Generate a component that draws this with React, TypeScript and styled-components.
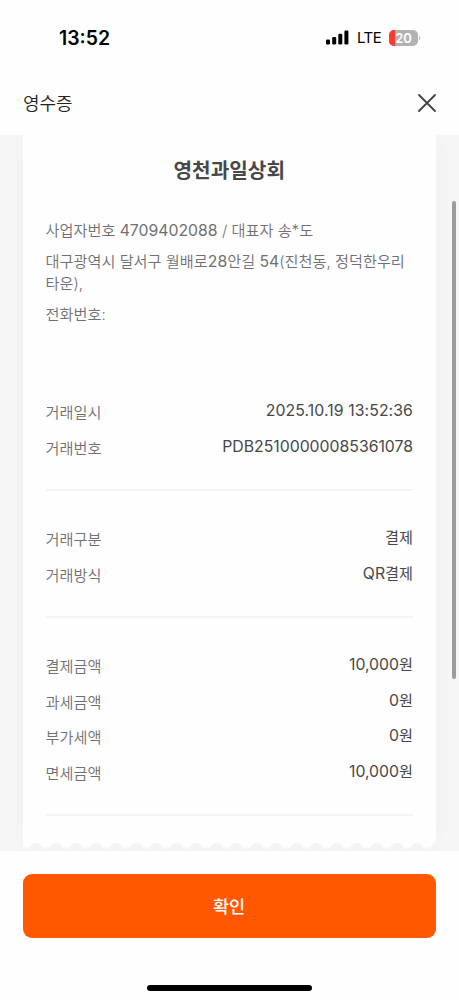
import React from 'react';
import styled, { createGlobalStyle } from 'styled-components';

const Global = createGlobalStyle`
  * { box-sizing: border-box; }
  body { margin: 0; background: #fefefe; }
`;

const Screen = styled.div`
  width: 459px;
  height: 1000px;
  display: flex;
  flex-direction: column;
  overflow: hidden;
  background: #fefefe;
  font-family: Inter, 'Noto Sans CJK KR', sans-serif;
  color: #474749;
`;

const StatusBar = styled.div`
  height: 72px;
  flex: none;
  display: flex;
  align-items: center;
  justify-content: space-between;
  padding: 3px 38px 0 59px;
  color: #000;
`;

const Clock = styled.span`
  font-size: 19.4px;
  font-weight: 600;
  line-height: 24px;
`;

const StatusIcons = styled.div`
  display: flex;
  align-items: center;
`;

const Carrier = styled.span`
  margin: 0 7.5px 0 7.5px;
  font-size: 15px;
  line-height: 20px;
  letter-spacing: -0.4px;
`;

const Header = styled.header`
  height: 63px;
  flex: none;
  display: flex;
  align-items: center;
  justify-content: space-between;
  padding: 0 23px 1px;
`;

const HeaderTitle = styled.h1`
  margin: 0;
  padding-top: 2px;
  font-size: 18px;
  font-weight: 350;
  line-height: 24px;
  letter-spacing: -0.1px;
  color: #222;
`;

const CloseButton = styled.button`
  width: 18px;
  height: 18px;
  padding: 0;
  border: 0;
  background: none;
  display: flex;
`;

const Body = styled.main`
  height: 716px;
  flex: none;
  display: flex;
  justify-content: space-between;
  padding-left: 23px;
  overflow: hidden;
  background: #f6f6f6;
`;

const Receipt = styled.section`
  width: 413px;
  height: 713px;
  display: flex;
  flex-direction: column;
  background: #fefefe;
  box-shadow: 0 0 20px rgba(0, 0, 0, 0.03);
`;

const Content = styled.div`
  height: 706px;
  flex: none;
  padding: 21px 23px 0 22.5px;
`;

const Scallops = styled.svg`
  display: block;
  flex: none;
`;

const ScrollThumb = styled.div`
  width: 4px;
  height: 478px;
  margin: 66px 3px 0 0;
  border-radius: 2px;
  background: #9d9d9d;
`;

const StoreName = styled.h2`
  margin: 0 0 34px;
  font-size: 20.2px;
  font-weight: 700;
  line-height: 30px;
  text-align: center;
`;

const StoreInfo = styled.div`
  height: 169px;
  display: flex;
  flex-direction: column;
  gap: 8.8px;
  color: #707072;
`;

const InfoLine = styled.p`
  margin: 0;
  font-size: 15.2px;
  font-weight: 350;
  line-height: 22px;
  white-space: nowrap;
`;

const Latin = styled.span`
  font-size: 15.8px;
  font-weight: 380;
  line-height: 1;
`;

const Group = styled.dl<{ $height: number; $top: number }>`
  height: ${(p) => p.$height}px;
  margin: 0;
  padding-top: ${(p) => p.$top}px;
  border-bottom: 2px solid #f4f4f4;
`;

const Row = styled.div`
  height: 35.5px;
  display: flex;
  justify-content: space-between;
`;

const Label = styled.dt`
  padding-top: 2px;
  font-size: 15.2px;
  font-weight: 350;
  line-height: 24px;
  color: #707072;
`;

const Value = styled.dd<{ $spacing: number }>`
  margin: 0;
  font-size: 15.2px;
  line-height: 24px;
  letter-spacing: ${(p) => p.$spacing}px;
`;

const Footer = styled.footer`
  flex: 1;
  display: flex;
  flex-direction: column;
  align-items: center;
  padding: 23px 23px 0;
`;

const ConfirmButton = styled.button`
  width: 413px;
  height: 64px;
  padding: 0 1px 1px 0;
  border: 0;
  border-radius: 9px;
  background: #ff5800;
  color: #fff;
  font-family: inherit;
  font-size: 17.5px;
  font-weight: 500;
`;

const HomeIndicator = styled.div`
  width: 165px;
  height: 6px;
  margin-top: 47px;
  border-radius: 3px;
  background: #000;
`;

const groups = [
  { height: 102, top: 10, rows: [['거래일시', '2025.10.19 13:52:36'], ['거래번호', 'PDB25100000085361078']] },
  { height: 127, top: 35, rows: [['거래구분', '결제'], ['거래방식', 'QR결제']] },
  { height: 198, top: 35, rows: [['결제금액', '10,000원'], ['과세금액', '0원'], ['부가세액', '0원'], ['면세금액', '10,000원']] },
];

const notches = Array.from({ length: 21 }, (_, i) => 13.3 + i * 20.03);

// Latin letters and digits are set slightly larger than the Hangul around them.
function Mixed({ text }: { text: string }) {
  return (
    <>
      {text.split(/([0-9A-Z][0-9A-Z.,: ]*[0-9A-Z]|[0-9])/).map((part, i) =>
        i % 2 ? <Latin key={i}>{part}</Latin> : part,
      )}
    </>
  );
}

export default function App() {
  return (
    <Screen>
      <Global />
      <StatusBar>
        <Clock>13:52</Clock>
        <StatusIcons>
          <svg width="23" height="15" viewBox="0 0 23 15">
            <rect x="0" y="9.5" width="4" height="5" rx="1.2" />
            <rect x="6.2" y="7" width="4" height="7.5" rx="1.2" />
            <rect x="12.3" y="3.8" width="4" height="10.7" rx="1.2" />
            <rect x="18.4" y="0.5" width="4" height="14" rx="1.2" />
          </svg>
          <Carrier>LTE</Carrier>
          <svg width="32" height="16" viewBox="0 0 32 16">
            <clipPath id="cell"><rect width="29" height="16" rx="5" /></clipPath>
            <g clipPath="url(#cell)">
              <rect width="29" height="16" fill="#b2b2b2" />
              <rect width="6" height="16" fill="#ff3a30" />
            </g>
            <path d="M30 5.8c1.7.8 1.7 3.8 0 4.6z" fill="#b8b8b8" />
            <text x="14.6" y="12.8" textAnchor="middle" fill="#fff" fontFamily="Inter, sans-serif" fontSize="13" fontWeight="600">20</text>
          </svg>
        </StatusIcons>
      </StatusBar>
      <Header>
        <HeaderTitle>영수증</HeaderTitle>
        <CloseButton aria-label="닫기">
          <svg width="18" height="18" viewBox="0 0 18 18" fill="none" stroke="#424244" strokeWidth="1.8" strokeLinecap="round">
            <path d="M1 1l16 16M17 1L1 17" />
          </svg>
        </CloseButton>
      </Header>
      <Body>
        <Receipt>
          <Content>
            <StoreName>영천과일상회</StoreName>
            <StoreInfo>
              <InfoLine><Mixed text="사업자번호 4709402088 / 대표자 송*도" /></InfoLine>
              <InfoLine><Mixed text="대구광역시 달서구 월배로28안길 54(진천동, 정덕한우리" /><br />타운),</InfoLine>
              <InfoLine>전화번호:</InfoLine>
            </StoreInfo>
            {groups.map((group) => (
              <Group key={group.height} $height={group.height} $top={group.top}>
                {group.rows.map(([label, value]) => (
                  <Row key={label}>
                    <Label>{label}</Label>
                    <Value $spacing={value.includes(':') ? 0.09 : 0}><Mixed text={value} /></Value>
                  </Row>
                ))}
              </Group>
            ))}
          </Content>
          <Scallops width="413" height="10" viewBox="0 0 413 10">
            <rect y="6.4" width="413" height="4" fill="#f5f5f5" />
            {notches.map((cx) => (
              <circle key={cx} cx={cx} cy="8.3" r="6.6" fill="#f4f4f4" />
            ))}
          </Scallops>
        </Receipt>
        <ScrollThumb />
      </Body>
      <Footer>
        <ConfirmButton>확인</ConfirmButton>
        <HomeIndicator />
      </Footer>
    </Screen>
  );
}
